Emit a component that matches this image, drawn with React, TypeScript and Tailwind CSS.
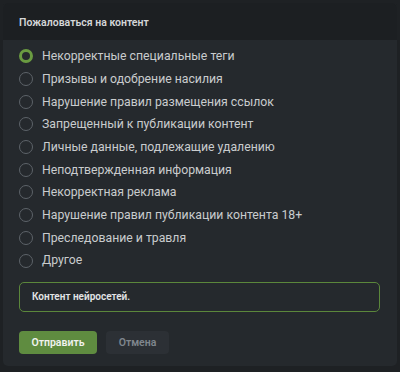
const reasons = [
  'Некорректные специальные теги',
  'Призывы и одобрение насилия',
  'Нарушение правил размещения ссылок',
  'Запрещенный к публикации контент',
  'Личные данные, подлежащие удалению',
  'Неподтвержденная информация',
  'Некорректная реклама',
  'Нарушение правил публикации контента 18+',
  'Преследование и травля',
  'Другое',
];

export default function App() {
  const selected = 0;
  return (
    <div
      className="w-[400px] h-[372px] bg-[#1e2124] p-[3px] pb-[6px]"
      style={{ fontFamily: 'Roboto, "Noto Sans", sans-serif' }}
    >
      <div className="h-full rounded-[5px] overflow-hidden bg-[#25292d] flex flex-col">
        <div className="h-[37px] bg-[#1c1f22] flex items-center px-[16px] pt-[2px]">
          <h2 className="text-[10.5px] font-semibold text-[#d4d6d8]">Пожаловаться на контент</h2>
        </div>
        <div className="flex-1 px-[16px] pt-[5px]">
          <ul className="flex flex-col">
            {reasons.map((r, i) => (
              <li key={r} className="h-[22.7px] flex items-center gap-[9px]">
                {i === selected ? (
                  <span className="w-[14px] h-[14px] rounded-full border-[3.5px] border-[#6a9b41] bg-[#25292d] shrink-0" />
                ) : (
                  <span className="w-[14px] h-[14px] rounded-full border border-[#5d6369] shrink-0" />
                )}
                <span className="text-[12.25px] text-[#c9ccce] leading-none">{r}</span>
              </li>
            ))}
          </ul>
          <div className="mt-[10px] h-[30px] w-[361px] rounded-[5px] border border-[#5b873b] flex items-center px-[12px]">
            <span className="text-[10px] font-semibold text-[#e2e4e6]">Контент нейросетей.</span>
          </div>
          <div className="mt-[19px] flex gap-[9px]">
            <button className="w-[78px] h-[23px] rounded-[4px] bg-[#5f8c40] text-[10.5px] font-semibold text-[#f0f2ee]">
              Отправить
            </button>
            <button className="w-[63px] h-[23px] rounded-[4px] bg-[#2c3035] text-[10.5px] font-semibold text-[#7f868d]">
              Отмена
            </button>
          </div>
        </div>
      </div>
    </div>
  );
}
